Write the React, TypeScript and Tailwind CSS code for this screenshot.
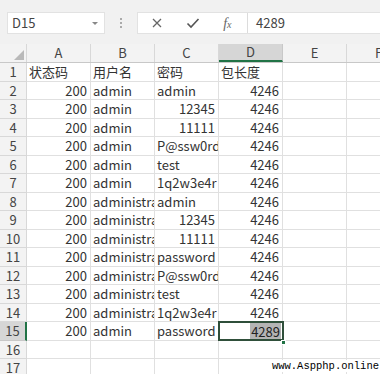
import React from "react";

type Cell = { v: string; num?: boolean };

const colLetters = ["A", "B", "C", "D", "E", "F"];

const n = (v: string): Cell => ({ v, num: true });
const t = (v: string): Cell => ({ v });

const rows: Cell[][] = [
  [t("状态码"), t("用户名"), t("密码"), t("包长度")],
  [n("200"), t("admin"), t("admin"), n("4246")],
  [n("200"), t("admin"), n("12345"), n("4246")],
  [n("200"), t("admin"), n("11111"), n("4246")],
  [n("200"), t("admin"), t("P@ssw0rd"), n("4246")],
  [n("200"), t("admin"), t("test"), n("4246")],
  [n("200"), t("admin"), t("1q2w3e4r"), n("4246")],
  [n("200"), t("administrator"), t("admin"), n("4246")],
  [n("200"), t("administrator"), n("12345"), n("4246")],
  [n("200"), t("administrator"), n("11111"), n("4246")],
  [n("200"), t("administrator"), t("password"), n("4246")],
  [n("200"), t("administrator"), t("P@ssw0rd"), n("4246")],
  [n("200"), t("administrator"), t("test"), n("4246")],
  [n("200"), t("administrator"), t("1q2w3e4r"), n("4246")],
  [n("200"), t("admin"), t("password"), n("4289")],
  [],
  [],
];

export default function App() {
  return (
    <div
      className="w-[380px] h-[374px] overflow-hidden bg-white text-[#333] relative"
      style={{ fontFamily: '"Noto Sans CJK SC", "Noto Sans", sans-serif' }}
    >
      {/* Formula bar */}
      <div className="h-[44px] bg-[#f1f1f1] flex items-start pt-[12px] pl-[7px]">
        <div className="w-[98px] h-[22px] bg-white border border-[#e2e2e2] flex items-center justify-between pl-[4px] pr-[6px] text-[13px] text-[#444]">
          <span>D15</span>
          <span className="w-0 h-0 border-l-[3px] border-r-[3px] border-t-[3px] border-l-transparent border-r-transparent border-t-[#888]" />
        </div>
        <div className="w-[32px] h-[22px] flex flex-col items-center justify-center gap-[2px]">
          <span className="w-[2px] h-[2px] bg-[#aaa]" />
          <span className="w-[2px] h-[2px] bg-[#aaa]" />
          <span className="w-[2px] h-[2px] bg-[#aaa]" />
        </div>
        <div className="flex-1 h-[22px] bg-white border border-[#e2e2e2] border-r-0 flex items-center">
          <div className="w-[109px] h-full flex items-center justify-around pl-[2px] pr-[4px] text-[#666]">
            <svg width="12" height="12" viewBox="0 0 12 12">
              <path d="M2 2 L10 10 M10 2 L2 10" stroke="#666" strokeWidth="1.3" fill="none" />
            </svg>
            <svg width="14" height="12" viewBox="0 0 14 12">
              <path d="M1.5 6.5 L5 10 L12.5 2" stroke="#555" strokeWidth="1.6" fill="none" />
            </svg>
            <span className="italic text-[14px] text-[#666]" style={{ fontFamily: '"Liberation Serif", serif' }}>
              f<span className="text-[10px]">x</span>
            </span>
          </div>
          <div className="w-px h-[20px] bg-[#dcdcdc]" />
          <div className="pl-[8px] text-[13px] text-[#444]">4289</div>
        </div>
      </div>

      {/* Column headers */}
      <div className="flex h-[19px] bg-[#f3f3f3] border-b border-[#c8c8c8] text-[13px] text-[#444]">
        <div className="w-[27px] shrink-0 flex items-end justify-end pr-[2px] pb-[2px] border-r border-[#d8d8d8]">
          <svg width="10" height="10" viewBox="0 0 10 10">
            <path d="M10 0 L10 10 L0 10 Z" fill="#b9b9b9" />
          </svg>
        </div>
        {colLetters.map((c) => (
          <div
            key={c}
            className={
              c === "D"
                ? "w-[64px] shrink-0 flex items-center justify-center bg-[#d6d6d6] border-r border-[#c8c8c8] border-b-2 border-b-[#217346]"
                : "w-[64px] shrink-0 flex items-center justify-center border-r border-[#d8d8d8]"
            }
          >
            {c}
          </div>
        ))}
      </div>

      {/* Grid */}
      {rows.map((row, ri) => {
        const rowNum = ri + 1;
        const active = rowNum === 15;
        return (
          <div key={ri} className="flex h-[18.5px] text-[13px] leading-none">
            <div
              className={
                active
                  ? "w-[27px] shrink-0 flex items-center justify-center bg-[#d6d6d6] border-b border-[#c8c8c8] border-r-2 border-r-[#217346] text-[#444]"
                  : "w-[27px] shrink-0 flex items-center justify-center bg-[#f3f3f3] border-b border-r border-[#d8d8d8] text-[#444]"
              }
            >
              {rowNum}
            </div>
            {colLetters.map((c, ci) => {
              const cell = row[ci];
              const selected = active && c === "D";
              return (
                <div
                  key={c}
                  className={
                    selected
                      ? "w-[64px] shrink-0 relative flex items-center justify-end pr-[2px] overflow-visible"
                      : cell?.num
                        ? "w-[64px] shrink-0 flex items-center justify-end pr-[3px] border-b border-r border-[#e0e0e0] overflow-hidden whitespace-nowrap"
                        : "w-[64px] shrink-0 flex items-center justify-start pl-[2px] border-b border-r border-[#e0e0e0] overflow-hidden whitespace-nowrap"
                  }
                >
                  {selected ? (
                    <>
                      <div className="absolute -left-px -top-px w-[66px] h-[20px] border-2 border-[#2f4f3a] pointer-events-none" />
                      <span className="bg-[#b4b4b4] text-[#222] px-[1px] py-[2px]">{cell?.v}</span>
                      <div className="absolute right-[-3px] bottom-[-4px] w-[5px] h-[5px] bg-[#217346] border border-white" />
                    </>
                  ) : (
                    cell?.v ?? ""
                  )}
                </div>
              );
            })}
          </div>
        );
      })}

      <div
        className="absolute right-0 bottom-[2px] bg-white pl-[4px] pr-[1px] text-[10.5px] text-black leading-[12px]"
        style={{ fontFamily: '"Liberation Mono", monospace' }}
      >
        www.Aspphp.online
      </div>
    </div>
  );
}
